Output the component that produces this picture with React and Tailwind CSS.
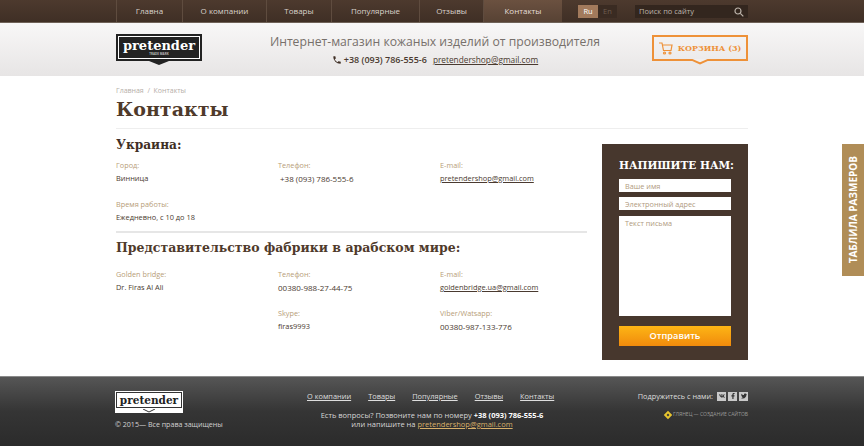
import React from "react";
import { FaVk, FaFacebookF, FaTwitter } from "react-icons/fa";

const sans = "font-['Open_Sans','Noto_Sans',sans-serif]";
const slab = "font-['DejaVu_Serif','Liberation_Serif',serif]";

const navItems = [
  { label: "Главна", width: "w-[66px]" },
  { label: "О компании", width: "w-[84px]" },
  { label: "Товары", width: "w-[65px]" },
  { label: "Популярные", width: "w-[88px]" },
  { label: "Отзывы", width: "w-[64px]" },
];

const footerLinks = ["О компании", "Товары", "Популярные", "Отзывы", "Контакты"];

const Logo = ({ small }) =>
  small ? (
    <div className="w-[68px] h-[22px] bg-white p-px relative">
      <div className="h-[16px] border border-[#333] flex items-center justify-center">
        <span className={`${slab} text-[#222] text-[10.5px] leading-none font-bold`}>pretender</span>
      </div>
      <svg className="absolute left-[28px] bottom-0" width="12" height="4" viewBox="0 0 12 4">
        <path d="M0 0 L6 3 L12 0" fill="none" stroke="#333" strokeWidth="1" />
      </svg>
    </div>
  ) : (
    <div className="w-[86px] relative">
      <div className="h-[27px] bg-[#222] p-[2px]">
        <div className="h-full border border-white flex flex-col items-center justify-center">
          <span className={`${slab} text-white text-[13px] leading-[13px] font-bold`}>pretender</span>
          <span className="text-[#bbb] text-[3px] leading-[4px] font-bold">TRADE MARK</span>
        </div>
      </div>
      <svg className="block mx-auto" width="20" height="4" viewBox="0 0 20 4">
        <path d="M0 0 H20 L10 4 Z" fill="#222" />
      </svg>
    </div>
  );

const Info = ({ label, value, link, digits, className }) => (
  <div className={className}>
    <p className="text-[#b79d78] text-[7.3px] leading-[12px]">{label}</p>
    <p
      className={`mt-[1px] leading-[13px] text-[#4a3a30] ${digits ? "text-[8px]" : "text-[7.4px]"} ${link ? "underline" : ""}`}
    >
      {value}
    </p>
  </div>
);

export default function App() {
  return (
    <div className={`${sans} relative w-[864px] h-[446px] overflow-hidden bg-white`}>
      {/* top nav */}
      <div className="h-[23px] bg-gradient-to-b from-[#4d3a2e] to-[#3f2f25] border-b border-[#6f6258]">
        <div className="w-[632px] ml-[116px] flex items-stretch h-full">
          {navItems.map((item) => (
            <div
              key={item.label}
              className={`${item.width} border-l border-[#5f4c3f] flex items-center justify-center text-[8px] text-[#d9d2cb]`}
            >
              {item.label}
            </div>
          ))}
          <div className="w-[79px] bg-gradient-to-b from-[#6b5140] to-[#574234] border-l border-[#5f4c3f] flex items-center justify-center text-[8px] text-[#e6dfd8]">
            Контакты
          </div>
          <div className="ml-[16px] mt-[5px] h-[13px] flex text-[7.5px]">
            <span className="w-[20px] bg-[#a27a5c] text-white flex items-center justify-center">Ru</span>
            <span className="w-[19px] bg-[#3a2b22] text-[#6e5d50] flex items-center justify-center">En</span>
          </div>
          <div className="ml-[18px] mt-[5px] h-[13px] w-[113px] bg-[#33261e] flex items-center justify-between px-[4px] text-[7.5px] text-[#bdb4ab]">
            Поиск по сайту
            <svg width="10" height="10" viewBox="0 0 10 10" fill="none" stroke="#bdb4ab" strokeWidth="1.2">
              <circle cx="4" cy="4" r="3" />
              <path d="M6.3 6.3 L9.3 9.3" />
            </svg>
          </div>
        </div>
      </div>

      {/* header */}
      <div className="h-[53px] bg-gradient-to-b from-[#f8f7f7] to-[#e7e5e5]">
        <div className="ml-[116px] w-[632px] h-full flex items-start">
          <div className="mt-[11px] shrink-0">
            <Logo />
          </div>
          <div className="w-[450px] pl-[16px] text-center">
            <p className="mt-[11px] text-[12.2px] leading-[16px] text-[#77706b]">
              Интернет-магазин кожаных изделий от производителя
            </p>
            <p className="mt-[3px] flex items-center justify-center text-[9px] leading-[14px] text-[#4a3a30]">
              <svg className="mr-[2px]" width="10" height="10" viewBox="0 0 24 24" fill="#3f2f25">
                <path d="M6.6 10.8a15 15 0 0 0 6.6 6.6l2.2-2.2a1 1 0 0 1 1-.25 11 11 0 0 0 3.6.6 1 1 0 0 1 1 1V20a1 1 0 0 1-1 1A17 17 0 0 1 3 4a1 1 0 0 1 1-1h3.5a1 1 0 0 1 1 1c0 1.25.2 2.45.6 3.6a1 1 0 0 1-.25 1z" />
              </svg>
              <span className="font-semibold">+38 (093) 786-555-6</span>
              <span className="ml-[6px] text-[8.3px] underline">pretendershop@gmail.com</span>
            </p>
          </div>
          <div className="relative mt-[12px] ml-auto w-[96px] h-[26px] border-2 border-[#ee9138] flex items-center justify-center gap-[5px]">
            <svg width="14" height="13" viewBox="0 0 14 13" fill="none" stroke="#ee9138" strokeWidth="1.2">
              <path d="M0 1 H3 L4.5 8.5 H12 L13 3 H3.5" />
              <circle cx="5.5" cy="11" r="1" />
              <circle cx="11" cy="11" r="1" />
            </svg>
            <span className={`${slab} text-[#ee9138] text-[8px] font-bold`}>КОРЗИНА (3)</span>
            <svg className="absolute left-[36px] -bottom-[6px]" width="20" height="6" viewBox="0 0 20 6">
              <path d="M0 0 L10 4.5 L20 0" fill="#f1efef" stroke="#ee9138" strokeWidth="2" />
            </svg>
          </div>
        </div>
      </div>

      {/* main */}
      <div className="h-[300px] ml-[116px] w-[632px]">
        <div className="pt-[10px] text-[7px] leading-[10px] text-[#b5aea8]">Главная&nbsp; /&nbsp; Контакты</div>
        <h1 className={`${slab} -mt-[1px] text-[19px] leading-[28px] font-bold text-[#4f3a2b]`}>Контакты</h1>
        <div className="mt-[5px] h-px bg-[#eeeeee]" />

        <div className="flex justify-between">
          <div className="w-[471px]">
            <h2 className={`${slab} mt-[7px] text-[12.2px] leading-[18px] font-bold text-[#3f2f25]`}>Украина:</h2>
            <div className="mt-[5px] grid grid-cols-[162px_162px_1fr] gap-y-[13px]">
              <Info label="Город:" value="Винница" />
              <Info label="Телефон:" value={<span className="ml-[2px]">+38 (093) 786-555-6</span>} digits />
              <Info label="E-mail:" value="pretendershop@gmail.com" link />
              <Info label="Время работы:" value="Ежедневно, с 10 до 18" />
            </div>
            <div className="mt-[7px] h-[2px] bg-[#e6e6e6]" />
            <h2 className={`${slab} mt-[6px] text-[12.5px] leading-[18px] font-bold text-[#4f3a2b]`}>
              Представительство фабрики в арабском мире:
            </h2>
            <div className="mt-[11px] grid grid-cols-[162px_162px_1fr] gap-y-[13px]">
              <Info label="Golden bridge:" value="Dr. Firas Al Ali" />
              <Info label="Телефон:" value="00380-988-27-44-75" digits />
              <Info label="E-mail:" value="goldenbridge.ua@gmail.com" link />
              <Info className="col-start-2" label="Skype:" value="firas9993" />
              <Info label="Viber/Watsapp:" value="00380-987-133-776" digits />
            </div>
          </div>

          <div className="mt-[15px] w-[146px] h-[216px] bg-[#47372d] px-[17px] pt-[13px]">
            <p className={`${slab} text-[10.5px] leading-[16px] font-bold text-white text-center whitespace-nowrap`}>
              НАПИШИТЕ НАМ:
            </p>
            <input
              className="mt-[6px] block w-full h-[13px] bg-white px-[6px] text-[7.3px] placeholder:text-[#b09a80] outline-none"
              placeholder="Ваше имя"
            />
            <input
              className="mt-[5px] block w-full h-[13px] bg-white px-[6px] text-[7.3px] placeholder:text-[#b09a80] outline-none"
              placeholder="Электронный адрес"
            />
            <textarea
              className="mt-[6px] block w-full h-[100px] bg-white px-[6px] py-[2px] text-[7.3px] leading-[11px] resize-none placeholder:text-[#b09a80] outline-none"
              placeholder="Текст письма"
            />
            <button className="mt-[10px] block w-full h-[20px] bg-gradient-to-b from-[#fdb515] to-[#f08a0c] text-white text-[9.2px] font-semibold">
              Отправить
            </button>
          </div>
        </div>
      </div>

      {/* footer */}
      <div className="h-[70px] border-t border-[#8a8a8a] bg-gradient-to-b from-[#565656] via-[#353535] to-[#2b2b2b]">
        <div className="ml-[115px] w-[633px] flex items-start">
          <div className="w-[192px] shrink-0 pt-[14px]">
            <Logo small />
            <p className="mt-[6px] text-[7.1px] leading-[11px] text-[#d2d2d2]">© 2015— Все права защищены</p>
          </div>
          <div className="w-[300px] shrink-0 pt-[13px]">
            <div className="flex gap-[17px] text-[7.4px] leading-[12px] text-[#dedede] underline whitespace-nowrap">
              {footerLinks.map((link) => (
                <span key={link}>{link}</span>
              ))}
            </div>
            <div className="-ml-[67px] w-[384px] mt-[9px] text-center text-[7.5px] leading-[9px] text-[#d6d6d6]">
              <p>
                Есть вопросы? Позвоните нам по номеру <b className="text-white">+38 (093) 786-555-6</b>
              </p>
              <p>
                или напишите на <span className="underline text-[#d8b06a]">pretendershop@gmail.com</span>
              </p>
            </div>
          </div>
          <div className="flex-1 min-w-0 pt-[13px]">
            <div className="flex items-center justify-end text-[7.3px] leading-[12px] text-[#dedede] whitespace-nowrap">
              Подружитесь с нами:
              <span className="ml-[4px] flex gap-[2px]">
                {[FaVk, FaFacebookF, FaTwitter].map((Icon, i) => (
                  <span key={i} className="w-[9px] h-[9px] bg-[#c9c9c9] flex items-center justify-center">
                    <Icon className="text-[#333] text-[6px]" />
                  </span>
                ))}
              </span>
            </div>
            <div className="mt-[8px] flex items-center justify-end text-[5px] leading-[9px] text-[#9a9a9a] whitespace-nowrap">
              <span className="w-[6px] h-[6px] mr-[2px] rotate-45 border-2 border-[#e8c52e]" />
              ГЛЯНЕЦ — СОЗДАНИЕ САЙТОВ
            </div>
          </div>
        </div>
      </div>

      {/* side tab */}
      <div className="absolute right-0 top-[144px] w-[22px] h-[132px] bg-[#b08d57] flex items-center justify-center">
        <span className="[writing-mode:vertical-rl] rotate-180 text-white text-[10px] font-bold whitespace-nowrap">
          ТАБЛИЛА РАЗМЕРОВ
        </span>
      </div>
    </div>
  );
}
